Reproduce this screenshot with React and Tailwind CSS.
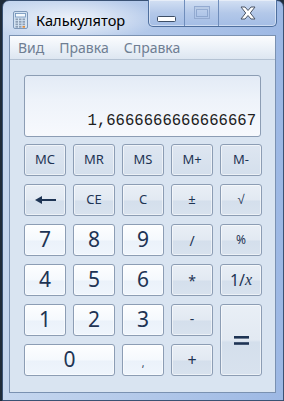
export default function App() {
  const base =
    "flex items-center justify-center rounded-[3px] border border-[#8c9db4] text-[#1e3454] shadow-[inset_0_0_0_1px_rgba(255,255,255,0.55)]";
  const mem = base + " bg-[linear-gradient(#dee6f1,#d4dfec)] text-[13px]";
  const op =
    base +
    " bg-[linear-gradient(#e9eff6_0%,#e2e9f2_50%,#d4dfec_53%,#d8e2ee_100%)]";
  const numBg =
    base +
    " bg-[linear-gradient(#fdfeff_0%,#f5f9fd_50%,#ebf2fa_53%,#eff5fc_100%)]";
  const num = numBg + " text-[21px]";

  return (
    <div className="w-[284px] h-[401px] bg-[#1f2c3a] flex overflow-hidden font-['Noto_Sans',sans-serif]">
      <div className="ml-[2px] w-[282px] h-[401px] flex flex-col rounded-t-[7px] border border-[#3a5274] bg-[linear-gradient(90deg,#c6d7ef_0%,#b5caea_45%,#9db8e4_100%)]">
        {/* Title bar */}
        <div className="h-[34px] flex items-start relative bg-[radial-gradient(ellipse_90px_22px_at_70px_18px,rgba(255,255,255,0.75),rgba(255,255,255,0))]">
          <div className="pl-[10px] pt-[10px] flex items-center">
            <svg width="15" height="18" viewBox="0 0 15 18">
              <rect x="0.5" y="0.5" width="14" height="17" rx="1.5" fill="#d3e2f2" stroke="#7e98b9" />
              <rect x="2.5" y="2.5" width="10" height="3.5" fill="#f4f9fd" stroke="#6d8fb8" strokeWidth="0.8" />
              {[0, 1, 2, 3].map((r) =>
                [0, 1, 2].map((c) => (
                  <rect
                    key={r + "-" + c}
                    x={2.5 + c * 3.5}
                    y={7.5 + r * 2.5}
                    width="2.5"
                    height="1.7"
                    fill={c === 2 && r === 3 ? "#e08a3a" : "#8d9fb6"}
                  />
                ))
              )}
            </svg>
            <span className="ml-[8px] text-[14.6px] leading-none text-black">Калькулятор</span>
          </div>
          <div className="flex-1" />
          <div className="mr-[6px] -mt-[1px] flex h-[27px] rounded-b-[5px] border border-t-0 border-[#4f6f9e] bg-[linear-gradient(#d3e0f3,#b3c8e9_50%,#a4bde5_100%)] shadow-[inset_0_0_0_1px_rgba(255,255,255,0.45)] overflow-hidden">
            <div className="w-[36px] flex items-center justify-center border-r border-[#6f8dbb]">
              <svg width="19" height="6" viewBox="0 0 19 6" className="mt-[12px]">
                <rect x="0.5" y="0.5" width="18" height="5" rx="1" fill="#ffffff" stroke="#3d4e66" />
              </svg>
            </div>
            <div className="w-[34px] flex items-center justify-center border-r border-[#6f8dbb]">
              <svg width="16" height="13" viewBox="0 0 16 13" className="-mt-[1px]">
                <rect x="0.5" y="0.5" width="15" height="12" fill="none" stroke="#93aad0" />
                <rect x="2.5" y="3.5" width="11" height="7" fill="none" stroke="#8ea7cf" />
                <rect x="1" y="1" width="14" height="2.2" fill="#b9cbe6" />
              </svg>
            </div>
            <div className="w-[57px] flex items-center justify-center">
              <svg width="16" height="14" viewBox="0 0 16 14" className="-mt-[1px]">
                <path
                  d="M1 1 L5 1 L8 4.5 L11 1 L15 1 L10.3 7 L15 13 L11 13 L8 9.5 L5 13 L1 13 L5.7 7 Z"
                  fill="#ffffff"
                  stroke="#4a5566"
                  strokeWidth="1"
                  strokeLinejoin="round"
                />
              </svg>
            </div>
          </div>
        </div>

        {/* Client area */}
        <div className="ml-[6px] mr-[7px] flex-1 flex flex-col border border-[#7a91b1] bg-[#d9e4f1]">
          <div className="h-[24px] flex items-center gap-[15px] pl-[8px] border-b border-[#b4c2d3] bg-[linear-gradient(#fbfcfe,#eef3f9_45%,#dde6f1_100%)] text-[14px] text-[#6f7e93]">
            <span>Вид</span>
            <span>Правка</span>
            <span>Справка</span>
          </div>

          <div className="px-[14px] pt-[15px]">
            <div className="h-[62px] rounded-[3px] border border-[#8c9db4] bg-[linear-gradient(#e3ebf6_0%,#eef3fa_40%,#f7f9fd_100%)] flex items-end justify-end pr-[4px] pb-[6px]">
              <span className="font-['Liberation_Mono',monospace] text-[15.6px] leading-none text-[#202020]">
                1,6666666666666667
              </span>
            </div>

            <div className="mt-[7px] grid grid-cols-[repeat(5,42px)] grid-rows-[repeat(6,32px)] gap-x-[7px] gap-y-[8px]">
              <div className={mem}>MC</div>
              <div className={mem}>MR</div>
              <div className={mem}>MS</div>
              <div className={mem}>M+</div>
              <div className={mem}>M-</div>

              <div className={op}>
                <svg width="21" height="8" viewBox="0 0 21 8">
                  <path d="M0 4 L7 0 L7 3 L21 3 L21 5 L7 5 L7 8 Z" fill="#1e3454" />
                </svg>
              </div>
              <div className={op + " text-[13px]"}>CE</div>
              <div className={op + " text-[13px]"}>C</div>
              <div className={op + " text-[13px]"}>±</div>
              <div className={op + " text-[13px]"}>√</div>

              <div className={num}>7</div>
              <div className={num}>8</div>
              <div className={num}>9</div>
              <div className={op + " text-[14px]"}>/</div>
              <div className={op + " text-[12px]"}>%</div>

              <div className={num}>4</div>
              <div className={num}>5</div>
              <div className={num}>6</div>
              <div className={op + " text-[14px]"}>*</div>
              <div className={op + " text-[16px]"}>
                <span>1/</span>
                <span className="font-['Liberation_Serif',serif] italic">x</span>
              </div>

              <div className={num}>1</div>
              <div className={num}>2</div>
              <div className={num}>3</div>
              <div className={op + " text-[14px] pb-[4px]"}>-</div>
              <div className={op + " row-span-2"}>
                <svg width="15" height="9" viewBox="0 0 15 9">
                  <rect x="0" y="0" width="15" height="2.6" fill="#1e3454" />
                  <rect x="0" y="6.2" width="15" height="2.6" fill="#1e3454" />
                </svg>
              </div>

              <div className={num + " col-span-2"}>0</div>
              <div className={numBg + " text-[10px] pt-[6px]"}>,</div>
              <div className={op + " text-[16px]"}>+</div>
            </div>
          </div>
        </div>
        <div className="h-[7px]" />
      </div>
    </div>
  );
}
